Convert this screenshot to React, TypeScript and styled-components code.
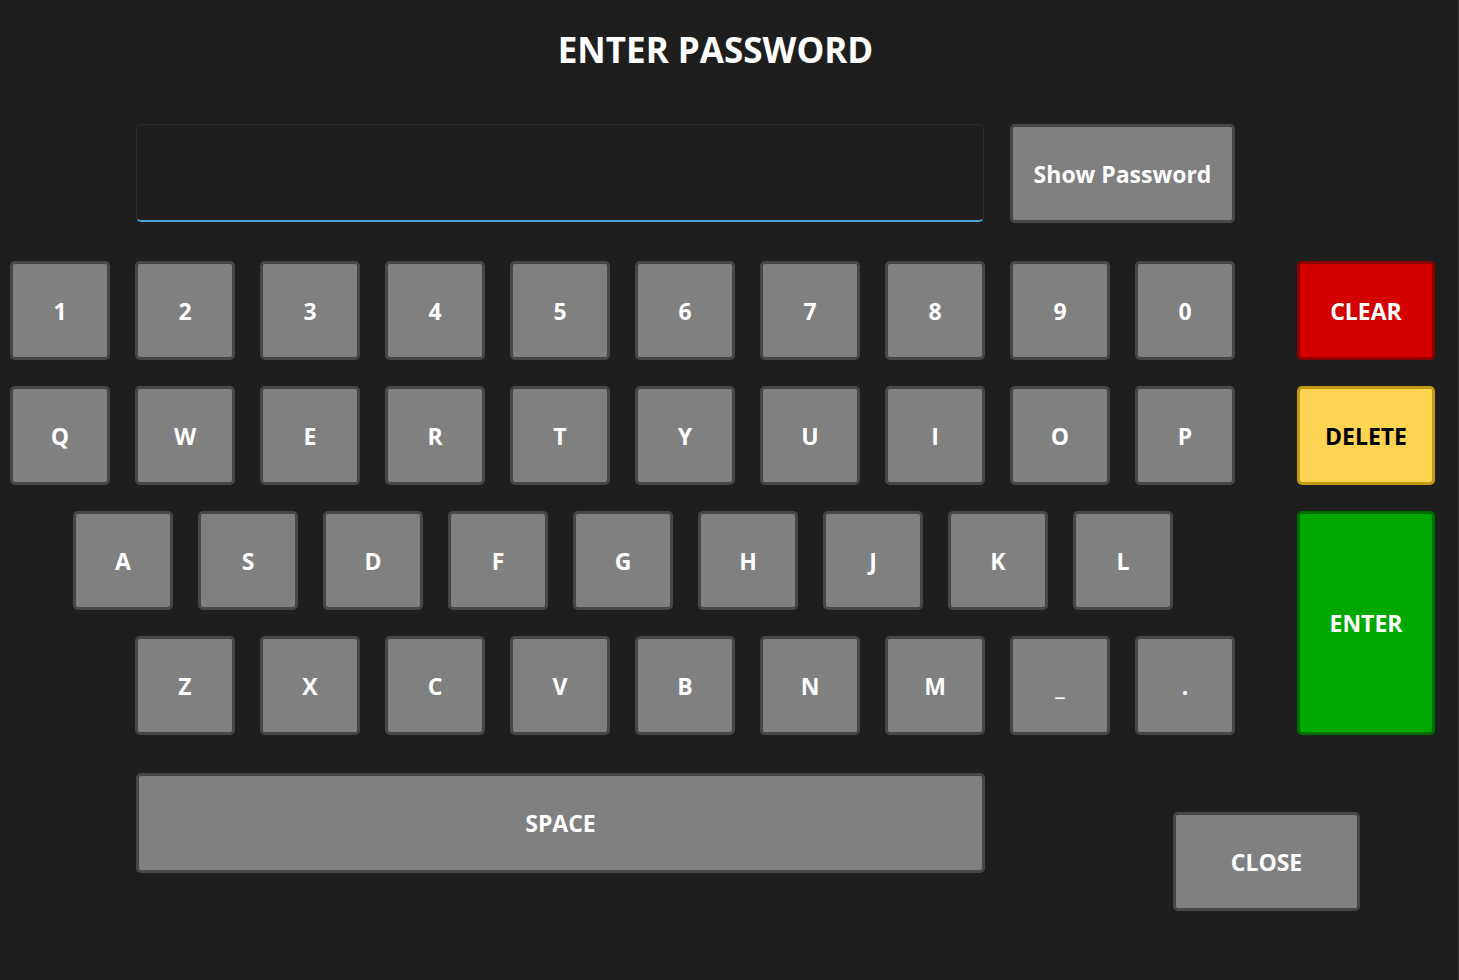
import React, { useState } from "react";
import styled, { createGlobalStyle } from "styled-components";

const GlobalStyle = createGlobalStyle`
  html, body {
    margin: 0;
    padding: 0;
    background: #1e1e1e;
  }
  * {
    box-sizing: border-box;
  }
`;

const Screen = styled.div`
  width: 1459px;
  height: 980px;
  background: #1e1e1e;
  border-right: 1px solid #383838;
  font-family: "Open Sans", "Noto Sans", sans-serif;
  color: #fff;
  overflow: hidden;
`;

const Title = styled.h1`
  width: 1431px;
  margin: 0;
  padding-top: 28px;
  height: 124px;
  text-align: center;
  font-size: 35px;
  line-height: 44px;
  font-weight: 700;
  color: #fff;
`;

const TopRow = styled.div`
  display: flex;
  gap: 26px;
  padding-left: 136px;
`;

const PasswordField = styled.input`
  width: 848px;
  height: 98px;
  background: #1f1f1f;
  border: 1px solid #2c2c2c;
  border-bottom: 2px solid #4fa3d1;
  border-radius: 5px;
  color: #fff;
  font-family: inherit;
  font-size: 28px;
  padding: 0 20px;
  outline: none;
`;

const Key = styled.button<{ $w?: number; $h?: number; $variant?: "default" | "red" | "yellow" | "green" }>`
  width: ${(p) => p.$w ?? 100}px;
  height: ${(p) => p.$h ?? 99}px;
  flex: none;
  display: flex;
  align-items: center;
  justify-content: center;
  padding: 0;
  border-radius: 5px;
  border: 3px solid
    ${(p) =>
      p.$variant === "red"
        ? "#8e0000"
        : p.$variant === "yellow"
        ? "#c39a10"
        : p.$variant === "green"
        ? "#006e00"
        : "#474747"};
  background: ${(p) =>
    p.$variant === "red"
      ? "#d40000"
      : p.$variant === "yellow"
      ? "#fed452"
      : p.$variant === "green"
      ? "#00a800"
      : "#808080"};
  color: ${(p) => (p.$variant === "yellow" ? "#000" : "#fff")};
  font-family: "Open Sans", "Noto Sans", sans-serif;
  font-size: 23px;
  font-weight: 700;
  cursor: pointer;
`;

const Board = styled.div`
  display: flex;
  align-items: flex-start;
  gap: 62px;
  margin-top: 38px;
`;

const Rows = styled.div`
  display: flex;
  flex-direction: column;
  gap: 26px;
  padding-left: 10px;
`;

const KeyRow = styled.div<{ $indent: number }>`
  display: flex;
  gap: 25px;
  padding-left: ${(p) => p.$indent}px;
`;

const SideColumn = styled.div`
  display: flex;
  flex-direction: column;
  gap: 26px;
`;

const BottomRow = styled.div`
  display: flex;
  align-items: flex-start;
  gap: 188px;
  padding-left: 136px;
  margin-top: 38px;
`;

const CloseSlot = styled.div`
  margin-top: 39px;
`;

const rows: { indent: number; keys: string[] }[] = [
  { indent: 0, keys: ["1", "2", "3", "4", "5", "6", "7", "8", "9", "0"] },
  { indent: 0, keys: ["Q", "W", "E", "R", "T", "Y", "U", "I", "O", "P"] },
  { indent: 63, keys: ["A", "S", "D", "F", "G", "H", "J", "K", "L"] },
  { indent: 125, keys: ["Z", "X", "C", "V", "B", "N", "M", "_", "."] },
];

const App: React.FC = () => {
  const [value, setValue] = useState("");
  const [visible, setVisible] = useState(false);

  return (
    <Screen>
      <GlobalStyle />
      <Title>ENTER PASSWORD</Title>
      <TopRow>
        <PasswordField
          type={visible ? "text" : "password"}
          value={value}
          onChange={(e) => setValue(e.target.value)}
        />
        <Key $w={225} onClick={() => setVisible(!visible)}>
          Show Password
        </Key>
      </TopRow>
      <Board>
        <Rows>
          {rows.map((row, i) => (
            <KeyRow key={i} $indent={row.indent}>
              {row.keys.map((k) => (
                <Key key={k} onClick={() => setValue(value + k)}>
                  {k}
                </Key>
              ))}
            </KeyRow>
          ))}
        </Rows>
        <SideColumn>
          <Key $w={138} $variant="red" onClick={() => setValue("")}>
            CLEAR
          </Key>
          <Key $w={138} $variant="yellow" onClick={() => setValue(value.slice(0, -1))}>
            DELETE
          </Key>
          <Key $w={138} $h={224} $variant="green">
            ENTER
          </Key>
        </SideColumn>
      </Board>
      <BottomRow>
        <Key $w={849} $h={100} onClick={() => setValue(value + " ")}>
          SPACE
        </Key>
        <CloseSlot>
          <Key $w={187}>CLOSE</Key>
        </CloseSlot>
      </BottomRow>
    </Screen>
  );
};

export default App;
